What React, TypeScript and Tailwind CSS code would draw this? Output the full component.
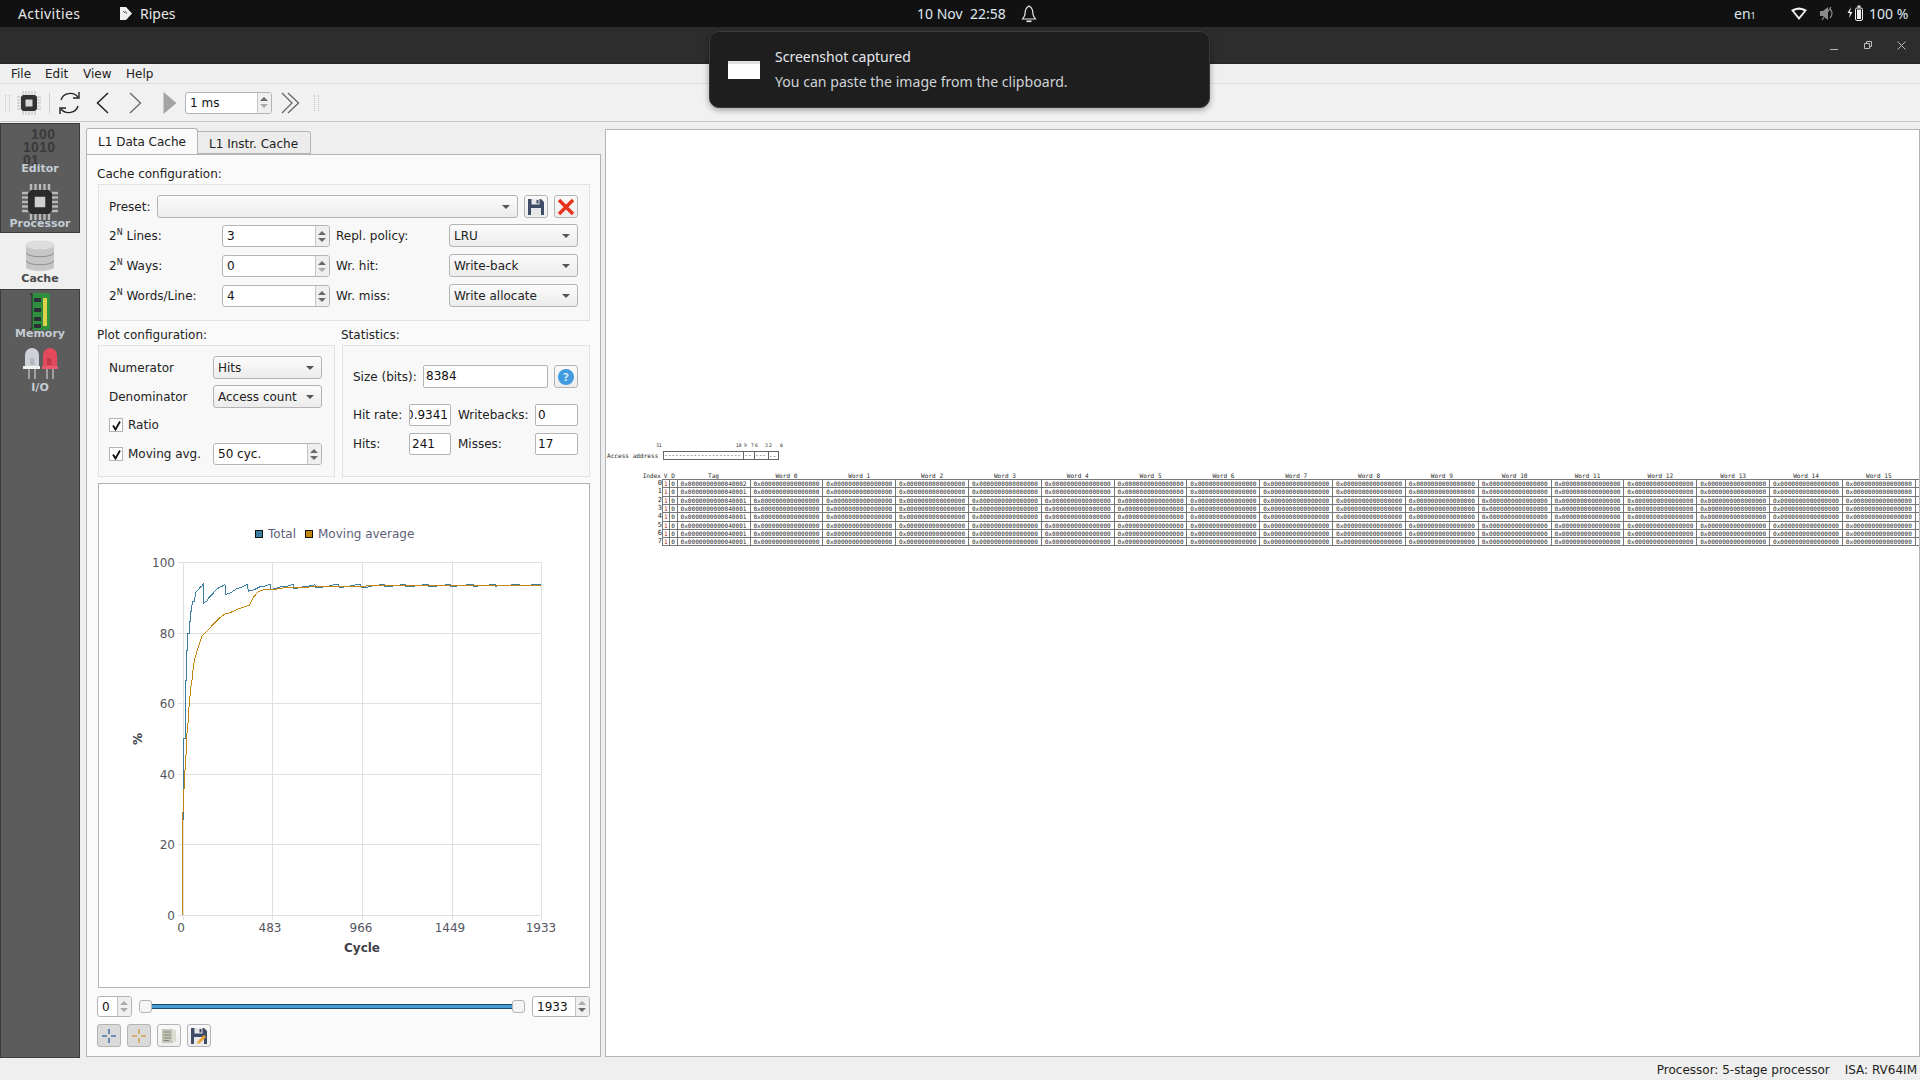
import React from "react";

const border = "border border-[#b4b4b4]";

function Tri({ up, color = "#5a5a5a" }: { up?: boolean; color?: string }) {
  return (
    <svg width="8" height="4" viewBox="0 0 8 4" className="block">
      <path d={up ? "M4 0 L8 4 H0 Z" : "M0 0 H8 L4 4 Z"} fill={color} />
    </svg>
  );
}

function Spin({ value, w, cls = "", downGray, upGray }: { value: string; w: string; cls?: string; downGray?: boolean; upGray?: boolean }) {
  return (
    <div className={`flex h-[22px] shrink-0 rounded-[3px] bg-white overflow-hidden ${border} ${w} ${cls}`}>
      <div className="flex-1 pl-[4px] leading-[21px] text-[#111] overflow-hidden">{value}</div>
      <div className="w-[14px] pr-[1px] border-l border-[#c4c4c4] bg-[#efefef] flex flex-col items-center justify-center gap-[3px]">
        <Tri up color={upGray ? "#aaaaaa" : "#6a6a6a"} />
        <Tri color={downGray ? "#aaaaaa" : "#6a6a6a"} />
      </div>
    </div>
  );
}

function Combo({ value, w, cls = "" }: { value: string; w: string; cls?: string }) {
  return (
    <div className={`flex items-center h-[23px] shrink-0 rounded-[3px] bg-gradient-to-b from-[#fbfbfb] to-[#ececec] ${border} ${w} ${cls}`}>
      <div className="flex-1 pl-[4px] text-[#222]">{value}</div>
      <div className="pr-[7px]">
        <Tri color="#555555" />
      </div>
    </div>
  );
}

function Field({ value, w, cls = "" }: { value: string; w: string; cls?: string }) {
  return (
    <div className={`h-[22px] shrink-0 rounded-[2px] bg-white pl-[2px] leading-[21px] text-[#111] overflow-hidden ${border} ${w} ${cls}`}>
      {value}
    </div>
  );
}

function ToolBtn({ children, pressed }: { children: React.ReactNode; pressed?: boolean }) {
  return (
    <div className={`w-[24px] h-[23px] shrink-0 flex items-center justify-center rounded-[3px] ${border} ${pressed ? "bg-[#dadada]" : "bg-gradient-to-b from-[#fafafa] to-[#ededed]"}`}>
      {children}
    </div>
  );
}

function Floppy({ pencil }: { pencil?: boolean }) {
  return (
    <svg width="18" height="18" viewBox="0 0 18 18">
      <path d="M1 1 H14 L17 4 V17 H1 Z" fill="#3f4c66" />
      <rect x="4.5" y="1" width="8" height="5.5" fill="#e8e8ea" />
      <rect x="9.5" y="2" width="2" height="3.5" fill="#3f4c66" />
      <rect x="4" y="10" width="10" height="7" fill="#e8e8ea" />
      {pencil && <path d="M7 17 L8 14 L14 8 L16 10 L10 16 Z" fill="#e8a33a" />}
    </svg>
  );
}

function Check({ label, cls = "" }: { label: string; cls?: string }) {
  return (
    <div className={`flex items-center ${cls}`}>
      <div className="w-[14px] h-[14px] shrink-0 bg-white border border-[#b4b4b4] flex items-center justify-center">
        <svg width="11" height="11" viewBox="0 0 11 11">
          <path d="M2 5.5 L4.5 9.5 L9 1.5" fill="none" stroke="#111" strokeWidth="1.8" />
        </svg>
      </div>
      <span className="ml-[5px] text-[#222]">{label}</span>
    </div>
  );
}

function Power() {
  return (
    <span>
      2<sup className="text-[8px] -top-[5px]">N</sup>
    </span>
  );
}

function Chip({ size = 24, body = "#333", pin = "#d0d0d0", core = "#d8d8d8" }: { size?: number; body?: string; pin?: string; core?: string }) {
  const t = [5, 8, 11, 14, 17];
  return (
    <svg width={size} height={size} viewBox="0 0 24 24">
      {t.map((p) => (
        <g key={p} stroke={pin} strokeWidth="1.6">
          <line x1={p + 1} y1="0" x2={p + 1} y2="5" />
          <line x1={p + 1} y1="19" x2={p + 1} y2="24" />
          <line x1="0" y1={p + 1} x2="5" y2={p + 1} />
          <line x1="19" y1={p + 1} x2="24" y2={p + 1} />
        </g>
      ))}
      <path d="M6 4 H18 L20 6 V18 L18 20 H6 L4 18 V6 Z" fill={body} />
      <rect x="8.5" y="8.5" width="7" height="7" fill={core} />
    </svg>
  );
}

function SideLabel({ children, dark }: { children: React.ReactNode; dark?: boolean }) {
  return (
    <div className={`text-[11px] font-bold leading-[12px] ${dark ? "text-[#4a4a4a]" : "text-[#c4ccd4]"}`}>{children}</div>
  );
}

function Sidebar() {
  return (
    <div className="w-[80px] shrink-0 mt-[1px] mb-[2px] flex flex-col">
      <div className="h-[110px] bg-[#5c5c5c] border border-[#3c3c3c] flex flex-col items-center">
        <div className="h-[54px] w-full flex flex-col relative">
          <div className="mt-[4px] ml-[22px] h-[38px] text-[14px] font-bold leading-[13px] text-[#3a3a3a] [font-family:'Liberation_Sans',sans-serif] tracking-[0.3px]">
            <div className="pl-[8px]">100</div>
            <div>1010</div>
            <div>01</div>
          </div>
          <div className="absolute top-[39px] left-0 right-0 text-center"><SideLabel>Editor</SideLabel></div>
        </div>
        <div className="h-[55px] flex flex-col items-center">
          <div className="mt-[6px]"><Chip size={36} body="#2b2b2b" pin="#b8b8b8" core="#cfcfcf" /></div>
          <div className="-mt-[2px]"><SideLabel>Processor</SideLabel></div>
        </div>
      </div>
      <div className="h-[56px] bg-[#efefef] flex flex-col items-center pt-[7px]">
        <svg width="30" height="32" viewBox="0 0 30 32">
          <path d="M1 5 C1 0 29 0 29 5 V27 C29 32 1 32 1 27 Z" fill="#c6c6c6" />
          <ellipse cx="15" cy="5" rx="14" ry="4.5" fill="#dcdcdc" />
          <path d="M1 13 C4 18 26 18 29 13" fill="none" stroke="#8e8e8e" />
          <path d="M1 21 C4 26 26 26 29 21" fill="none" stroke="#8e8e8e" />
        </svg>
        <div className="mt-[1px]"><SideLabel dark>Cache</SideLabel></div>
      </div>
      <div className="flex-1 bg-[#5c5c5c] border border-[#3c3c3c] flex flex-col items-center">
        <div className="mt-[3px] h-[35px]">
          <svg width="20" height="37" viewBox="0 0 20 37">
            <rect x="2" y="0" width="18" height="37" rx="2" fill="#2f8f3f" />
            <path d="M0 1 H2 V36 H0" fill="none" stroke="#222" />
            {[5, 15, 24, 31].map((y) => (
              <rect key={y} x="4" y={y} width="7" height="4" fill="#2e2e3a" />
            ))}
            <rect x="13" y="5" width="4" height="28" fill="#d9d24a" />
          </svg>
        </div>
        <SideLabel>Memory</SideLabel>
        <div className="mt-[7px]">
          <svg width="36" height="32" viewBox="0 0 36 32" className="block">
            <path d="M3 20 V8 a7 7 0 0 1 14 0 V20 Z" fill="#cfd2d8" />
            <path d="M8 11 H12 L13 18 H8 Z" fill="#b4b8c0" />
            <rect x="1" y="19" width="17" height="3" fill="#f0f0f0" />
            <path d="M21 20 V8 a7 7 0 0 1 14 0 V20 Z" fill="#e34a5b" />
            <path d="M25 11 H29 L30 18 H25 Z" fill="#c03a4c" />
            <rect x="20" y="19" width="16" height="3" fill="#ea5a6a" />
            <path d="M7 22 V32 M13 22 V32 M25 22 V32 M31 22 V32" stroke="#b8b8b8" strokeWidth="1.5" />
          </svg>
        </div>
        <div className="mt-[3px]"><SideLabel>I/O</SideLabel></div>
      </div>
    </div>
  );
}

const bluePts: [number, number][] = [
  [69, 930], [69, 900], [70, 900], [70, 685], [76, 685], [76, 512], [80, 512], [80, 421], [83, 421], [83, 370], [88, 370], [88, 335], [92, 335], [92, 305], [95, 305], [95, 290], [98, 275], [103, 275], [105, 260], [108, 245], [115, 240], [120, 232], [126, 228], [130, 223], [130, 280], [135, 276], [142, 272], [147, 262], [155, 255], [165, 243], [172, 236], [180, 231], [190, 227], [195, 223], [197, 253], [205, 251], [215, 246], [230, 236], [245, 232], [262, 223], [265, 244], [285, 238], [300, 230], [315, 228], [332, 223], [332, 238], [347, 236], [365, 229], [385, 228], [400, 223], [400, 235], [412, 235], [428, 230], [445, 229], [465, 224], [467, 232], [487, 232], [490, 229], [507, 228], [522, 224], [535, 224], [537, 232], [550, 232], [552, 228], [570, 228], [590, 224], [602, 224], [604, 232], [618, 232], [633, 230], [636, 227], [657, 227], [657, 224], [672, 224], [672, 229], [698, 229], [698, 227], [720, 227], [720, 224], [737, 224], [737, 229], [762, 229], [762, 227], [787, 227], [787, 224], [805, 224], [805, 229], [828, 229], [828, 227], [855, 227], [855, 224], [872, 224], [872, 229], [890, 229], [890, 227], [918, 227], [918, 224], [940, 224], [940, 229], [953, 229], [953, 227], [987, 227], [987, 224], [1007, 224], [1007, 229], [1010, 229], [1010, 227], [1053, 227], [1053, 224], [1077, 224], [1077, 227], [1115, 227], [1115, 224], [1144, 224],
];
const orangePts: [number, number][] = [
  [68, 1215], [68, 930], [71, 860], [73, 815], [78, 735], [80, 680], [85, 630], [87, 590], [92, 535], [96, 510], [100, 470], [105, 445], [112, 420], [125, 380], [135, 368], [145, 360], [160, 342], [178, 325], [195, 312], [210, 308], [235, 297], [268, 286], [280, 262], [295, 245], [315, 238], [350, 238], [355, 235], [400, 232], [450, 231], [470, 229], [540, 229], [600, 229], [640, 227], [1144, 227],
];
const ox = 99;
const oy = 484;
const toPath = (pts: [number, number][]) =>
  pts.map(([x, y]) => `${(160 + x / 3 - ox).toFixed(1)},${(510 + y / 3 - oy).toFixed(1)}`).join(" ");

function Chart() {
  const ys = [0, 20, 40, 60, 80, 100];
  const yPx = [915, 844, 774, 703, 633, 562];
  const xs = [
    { l: "0", x: 183, t: 181 },
    { l: "483", x: 272, t: 270 },
    { l: "966", x: 362, t: 361 },
    { l: "1449", x: 452, t: 450 },
    { l: "1933", x: 541, t: 541 },
  ];
  return (
    <svg width="490" height="503" viewBox="0 0 490 503" className="block">
      {yPx.map((y, i) => (
        <g key={i}>
          <line x1={178 - ox} x2={541 - ox} y1={y - oy + 0.5} y2={y - oy + 0.5} stroke="#e0e0e0" />
          <text x={175 - ox} y={y - oy + 4.5} textAnchor="end" fontSize="12" fill="#555560">{ys[i]}</text>
        </g>
      ))}
      {xs.map((v) => (
        <g key={v.l}>
          <line x1={v.x - ox + 0.5} x2={v.x - ox + 0.5} y1={562 - oy} y2={920 - oy} stroke="#e0e0e0" />
          <text x={v.t - ox} y={932 - oy} textAnchor="middle" fontSize="12" fill="#555560">{v.l}</text>
        </g>
      ))}
      <polyline points={toPath(bluePts)} fill="none" stroke="#3b7ea1" strokeWidth="1" shapeRendering="crispEdges" />
      <polyline points={toPath(orangePts)} fill="none" stroke="#c5860f" strokeWidth="1" shapeRendering="crispEdges" />
      <rect x={255.5 - ox} y={530.5 - oy} width="7" height="7" fill="#3b7ea1" stroke="#111" />
      <text x={268 - ox} y={538 - oy} fontSize="12" fill="#60607a">Total</text>
      <rect x={305.5 - ox} y={530.5 - oy} width="7" height="7" fill="#c5860f" stroke="#111" />
      <text x={318 - ox} y={538 - oy} fontSize="12" fill="#60607a">Moving average</text>
      <text x={362 - ox} y={952 - oy} fontSize="12" fontWeight="bold" textAnchor="middle" fill="#404048">Cycle</text>
      <text transform={`translate(${142 - ox} ${739 - oy}) rotate(-90)`} fontSize="12" fontWeight="bold" textAnchor="middle" fill="#404048">%</text>
    </svg>
  );
}

function LeftPanel() {
  const rows = [
    { l: "Lines:", v: "3", l2: "Repl. policy:", c: "LRU" },
    { l: "Ways:", v: "0", l2: "Wr. hit:", c: "Write-back", dg: true },
    { l: "Words/Line:", v: "4", l2: "Wr. miss:", c: "Write allocate" },
  ];
  return (
    <div className="w-[515px] ml-[6px] shrink-0 pt-[7px] flex flex-col">
      <div className="h-[25px] flex items-end relative z-10">
        <div className="w-[112px] h-[26px] bg-[#fafafa] border border-b-0 border-[#b4b4b4] rounded-t-[3px] pl-[11px] leading-[26px] text-[#222]">L1 Data Cache</div>
        <div className="w-[113px] h-[23px] bg-[#ececec] border border-l-0 border-[#b4b4b4] rounded-tr-[3px] pl-[11px] leading-[24px] text-[#222]">L1 Instr. Cache</div>
      </div>
      <div className={`h-[903px] bg-[#fafafa] ${border} pl-[10px] pr-[10px] pt-[10px] flex flex-col text-[#222]`}>
        <div className="h-[19px] leading-[18px]">Cache configuration:</div>
        <div className="ml-[1px] h-[137px] border border-[#e2e2e2] bg-[#f8f8f8] pl-[10px] pr-[11px] pt-[10px]">
          <div className="flex items-center">
            <div className="w-[48px]">Preset:</div>
            <Combo value="" w="w-[361px]" />
            <div className="ml-[6px]"><ToolBtn><Floppy /></ToolBtn></div>
            <div className="ml-[6px]">
              <ToolBtn>
                <svg width="18" height="18" viewBox="0 0 18 18">
                  <path d="M2 2 L16 16 M16 2 L2 16" stroke="#e8321a" strokeWidth="3.4" />
                </svg>
              </ToolBtn>
            </div>
          </div>
          <div className="mt-[6px] flex flex-col gap-[7px]">
            {rows.map((r) => (
              <div key={r.l} className="flex items-center h-[23px]">
                <div className="w-[113px]"><Power /> {r.l}</div>
                <Spin value={r.v} w="w-[108px]" cls="mt-[1px]" downGray={r.dg} />
                <div className="ml-[6px] w-[113px]">{r.l2}</div>
                <Combo value={r.c} w="w-[129px]" />
              </div>
            ))}
          </div>
        </div>
        <div className="flex mt-[4px] h-[20px] leading-[20px]">
          <div className="w-[244px]">Plot configuration:</div>
          <div>Statistics:</div>
        </div>
        <div className="flex ml-[1px] gap-[7px] h-[132px]">
          <div className="w-[237px] border border-[#e2e2e2] bg-[#f8f8f8] pl-[10px] pt-[10px]">
            <div className="flex items-center"><div className="w-[104px]">Numerator</div><Combo value="Hits" w="w-[109px]" /></div>
            <div className="flex items-center mt-[6px]"><div className="w-[104px]">Denominator</div><Combo value="Access count" w="w-[109px]" /></div>
            <Check label="Ratio" cls="mt-[8px]" />
            <div className="flex items-center mt-[9px]">
              <Check label="Moving avg." cls="w-[104px]" />
              <Spin value="50 cyc." w="w-[109px]" />
            </div>
          </div>
          <div className="w-[248px] border border-[#e2e2e2] bg-[#f8f8f8] pl-[10px] pt-[19px]">
            <div className="flex items-center">
              <div className="w-[70px]">Size (bits):</div>
              <Field value="8384" w="w-[125px] !h-[23px]" />
              <div className="ml-[6px]">
                <ToolBtn>
                  <svg width="16" height="16" viewBox="0 0 16 16">
                    <circle cx="8" cy="8" r="8" fill="#3f9ae0" />
                    <text x="8" y="12" textAnchor="middle" fontSize="11" fill="#cfe6f8" fontWeight="bold">?</text>
                  </svg>
                </ToolBtn>
              </div>
            </div>
            <div className="flex items-center mt-[16px]">
              <div className="w-[56px]">Hit rate:</div>
              <div className={`h-[22px] w-[42px] shrink-0 rounded-[2px] bg-white pr-[2px] leading-[21px] text-[#111] overflow-hidden flex justify-end whitespace-nowrap ${border}`}>
                <span className="shrink-0">0.9341</span>
              </div>
              <div className="ml-[7px] w-[77px]">Writebacks:</div>
              <Field value="0" w="w-[43px]" />
            </div>
            <div className="flex items-center mt-[7px]">
              <div className="w-[56px]">Hits:</div>
              <Field value="241" w="w-[42px]" />
              <div className="ml-[7px] w-[77px]">Misses:</div>
              <Field value="17" w="w-[43px]" />
            </div>
          </div>
        </div>
        <div className="ml-[1px] mt-[6px] h-[505px] w-[492px] bg-white border border-[#b4b4b4]">
          <Chart />
        </div>
        <div className="flex items-center h-[21px] mt-[8px]">
          <Spin value="0" w="w-[35px]" cls="!h-[21px]" upGray downGray />
          <div className="ml-[7px] w-[386px] h-[14px] relative flex items-center">
            <div className="w-full h-[5px] mx-[6px] bg-[#4a9bd5] border-y border-[#1d4a6c]" />
            <div className="absolute left-0 w-[13px] h-[13px] rounded-[3px] bg-[#f4f4f4] border border-[#b4b4b4]" />
            <div className="absolute right-0 w-[13px] h-[13px] rounded-[3px] bg-[#f4f4f4] border border-[#b4b4b4]" />
          </div>
          <Spin value="1933" w="w-[58px]" cls="ml-[7px] !h-[21px]" upGray />
        </div>
        <div className="flex gap-[6px] mt-[7px]">
          <ToolBtn pressed>
            <svg width="16" height="16" viewBox="0 0 16 16"><path d="M8 1 V6 M8 10 V15 M1 8 H6 M10 8 H15" stroke="#4a74a8" strokeWidth="1.6" /></svg>
          </ToolBtn>
          <ToolBtn pressed>
            <svg width="16" height="16" viewBox="0 0 16 16"><path d="M8 1 V6 M8 10 V15 M1 8 H6 M10 8 H15" stroke="#d4a04a" strokeWidth="1.6" /></svg>
          </ToolBtn>
          <ToolBtn>
            <svg width="16" height="16" viewBox="0 0 16 16">
              <rect x="1" y="1" width="11" height="14" fill="#c4c6b8" />
              <rect x="11" y="2" width="4" height="12" fill="#dcdcd0" />
              <path d="M2.5 4 H10 M2.5 7 H10 M2.5 10 H10 M2.5 12.5 H8" stroke="#85877c" strokeWidth="1.2" />
            </svg>
          </ToolBtn>
          <ToolBtn><Floppy pencil /></ToolBtn>
        </div>
      </div>
    </div>
  );
}

const W_COL = "w-[72.83px]";
const tag = (i: number) => (i === 0 ? "0x0000000000040002" : "0x0000000000040001");

function CacheTable() {
  const words = Array.from({ length: 16 }, (_, i) => i);
  const rows = Array.from({ length: 8 }, (_, i) => i);
  const bits: [string, number][] = [["31", 49], ["18", 129], ["9", 137], ["7", 144], ["6", 148], ["3", 158], ["2", 162], ["0", 173]];
  return (
    <div className="pt-[312px] pl-[1px] [font-family:'DejaVu_Sans_Mono',monospace] text-[6.1px] text-[#2a2a2a] leading-[8px]">
      <div className="relative h-[7px] text-[4.7px]">
        {bits.map(([t, x]) => (
          <span key={t} className="absolute top-0" style={{ left: x }}>{t}</span>
        ))}
      </div>
      <div className="flex items-center h-[9px] mt-[2px]">
        <div className="w-[56px]">Access address</div>
        <div className="w-[116px] h-[9px] border border-[#666] flex items-center leading-[6px] overflow-hidden">
          <div className="w-[80px] h-full border-r border-[#666] whitespace-nowrap">---------------------</div>
          <div className="w-[11px] h-full border-r border-[#666]">--</div>
          <div className="w-[14px] h-full border-r border-[#666]">---</div>
          <div className="flex-1">--</div>
        </div>
      </div>
      <div className="flex h-[7px] mt-[12px] text-center">
        <div className="w-[55px] text-right pr-[1px]">Index</div>
        <div className="w-[7px]">V</div>
        <div className="w-[8px]">D</div>
        <div className="w-[73px]">Tag</div>
        {words.map((w) => (
          <div key={w} className={W_COL}>Word {w}</div>
        ))}
      </div>
      <div className="flex flex-col">
        {rows.map((r) => (
          <div key={r} className="flex h-[8.35px]">
            <div className="w-[55px] text-right leading-[8px] text-[7px]">{r}</div>
            <div className={`flex flex-1 border-[#777] border-t border-l ${r === 7 ? "border-b" : ""}`}>
              <div className="w-[6.5px] text-center border-r border-[#777] text-[#b02020]">1</div>
              <div className="w-[8px] text-center border-r border-[#777]">0</div>
              <div className="w-[73px] text-center border-r border-[#777]">{tag(r)}</div>
              {words.map((w) => (
                <div key={w} className={`${W_COL} text-center border-r border-[#777]`}>0x0000000000000000</div>
              ))}
            </div>
          </div>
        ))}
      </div>
    </div>
  );
}

export default function App() {
  return (
    <div className="relative w-[1920px] h-[1080px] overflow-hidden bg-[#efefef] flex flex-col [font-family:'DejaVu_Sans',sans-serif] text-[12px]">
      {/* GNOME top bar */}
      <div className="h-[27px] shrink-0 bg-[#111111] flex items-center text-[#e8e8e8] text-[14px] [font-family:'Noto_Sans',sans-serif] relative">
        <div className="ml-[18px] w-[101px] tracking-[0.4px]">Activities</div>
        <svg width="13" height="13" viewBox="0 0 13 13"><path d="M1 0 H7 L13 6.5 L7 13 H1 Z" fill="#f0f0f0" /><path d="M4 4 L6 6 M6 4 L8 7" stroke="#666" /></svg>
        <div className="ml-[8px]">Ripes</div>
        <div className="absolute left-[917px] top-[3px] text-[#dfe8f0]">10 Nov&nbsp; 22:58</div>
        <div className="absolute left-[1021px] top-[5px]">
          <svg width="16" height="18" viewBox="0 0 16 18"><path d="M8 1 C4 3 4 6 4 9 C4 11 3 12 1.5 14 H14.5 C13 12 12 11 12 9 C12 6 12 3 8 1 Z" fill="none" stroke="#e8e8e8" strokeWidth="1.2" /><rect x="5.5" y="15.5" width="5" height="1.6" fill="#e8e8e8" /></svg>
        </div>
        <div className="absolute left-[1734px] top-[3px] text-[#dfe8f0]">en<span className="text-[9px]">1</span></div>
        <div className="absolute left-[1791px] top-[7px]">
          <svg width="16" height="13" viewBox="0 0 16 13"><path d="M0 3 Q8 -2 16 3 L8 13 Z M3 4 Q8 1.500 13 4 L8 10 Z" fill="#f0f0f0" fillRule="evenodd" /></svg>
        </div>
        <div className="absolute left-[1820px] top-[6px]">
          <svg width="15" height="15" viewBox="0 0 15 15"><path d="M0 5 H3 L8 1 V14 L3 10 H0 Z" fill="#8a8a8a" /><path d="M10 3 Q14 7.500 10 12 M2 14 L11 1" fill="none" stroke="#8a8a8a" strokeWidth="1.300" /></svg>
        </div>
        <div className="absolute left-[1847px] top-[5px]">
          <svg width="17" height="17" viewBox="0 0 17 17"><path d="M4 2 L0.500 8 H3 L2 13 L5.500 7 H3 Z" fill="#eee" /><rect x="8.500" y="3" width="7" height="12.500" rx="1.500" fill="none" stroke="#eee" /><rect x="10" y="4.500" width="4" height="9.500" fill="#eee" /><rect x="10.500" y="0.500" width="3" height="2" fill="#eee" /></svg>
        </div>
        <div className="absolute left-[1869px] top-[3px] text-[#dfe8f0]">100 %</div>
      </div>
      {/* Title bar */}
      <div className="h-[37px] shrink-0 bg-[#2d2d2d] flex items-center justify-end border-b border-[#262626]">
        <div className="w-[8px] h-[1px] bg-[#bdbdbd] mt-[9px]" />
        <svg className="ml-[26px]" width="8" height="8" viewBox="0 0 8 8"><path d="M0.500 2.500 H5.500 V7.500 H0.500 Z M2.500 2.500 V0.500 H7.500 V5.500 H5.500" fill="none" stroke="#bdbdbd" /></svg>
        <svg className="ml-[25px] mr-[14px]" width="9" height="9" viewBox="0 0 9 9"><path d="M0.500 0.500 L8.500 8.500 M8.500 0.500 L0.500 8.500" stroke="#bdbdbd" /></svg>
      </div>
      {/* Menu bar */}
      <div className="h-[20px] shrink-0 bg-[#efefef] border-b border-[#dcdcdc] flex items-center text-[#222] leading-[18px] pl-[11px]">
        <span className="w-[34px]">File</span>
        <span className="w-[38px]">Edit</span>
        <span className="w-[43px]">View</span>
        <span>Help</span>
      </div>
      {/* Toolbar */}
      <div className="h-[38px] shrink-0 bg-[#f1f1f1] border-b border-[#c8c8c8] flex items-center pl-[5px]">
        <div className="w-[5px] h-[16px] border-x border-dotted border-[#c4c4c4]" />
        <div className="ml-[7px]"><Chip size={24} /></div>
        <div className="ml-[8px] w-[1px] h-[20px] bg-[#d0d0d0]" />
        <svg className="ml-[8px]" width="23" height="24" viewBox="0 0 23 24">
          <path d="M3 9 C5 2 15 0 20 6 M20 15 C18 22 8 24 3 18" fill="none" stroke="#222" strokeWidth="1.400" />
          <path d="M21 1 V7 H15 M2 23 V17 H8" fill="none" stroke="#222" strokeWidth="1.400" />
        </svg>
        <svg className="ml-[15px]" width="13" height="22" viewBox="0 0 13 22"><path d="M12 1 L1.500 11 L12 21" fill="none" stroke="#222" strokeWidth="1.500" /></svg>
        <svg className="ml-[20px]" width="13" height="22" viewBox="0 0 13 22"><path d="M1 1 L11.500 11 L1 21" fill="none" stroke="#666" strokeWidth="1.300" /></svg>
        <svg className="ml-[21px]" width="14" height="22" viewBox="0 0 14 22"><path d="M0.500 0 L13.500 11 L0.500 22 Z" fill="#a4a4a4" /></svg>
        <Spin value="1 ms" w="w-[87px]" cls="ml-[8px]" downGray />
        <svg className="ml-[9px]" width="19" height="22" viewBox="0 0 19 22"><path d="M1 1 L11 11 L1 21 M7 1 L17.500 11 L7 21" fill="none" stroke="#666" strokeWidth="1.300" /></svg>
        <div className="ml-[14px] w-[5px] h-[16px] border-x border-dotted border-[#c4c4c4]" />
      </div>
      {/* Main */}
      <div className="h-[938px] shrink-0 flex">
        <Sidebar />
        <LeftPanel />
        <div className="ml-[4px] mt-[7px] mb-[3px] flex-1 min-w-0 bg-white border border-[#b4b4b4] overflow-hidden">
          <CacheTable />
        </div>
      </div>
      {/* Status bar */}
      <div className="h-[20px] shrink-0 flex items-center justify-end pr-[3px] text-[#222]">
        <span>Processor: 5-stage processor</span>
        <span className="ml-[15px]">ISA: RV64IM</span>
      </div>
      {/* Notification */}
      <div className="absolute left-[709px] top-[31px] w-[501px] h-[77px] rounded-[10px] bg-[#1e1e1e] border border-[#3a3a3a] shadow-[0_2px_6px_rgba(0,0,0,0.35)] flex items-center text-[#e4e8ec] [font-family:'Noto_Sans',sans-serif]">
        <div className="ml-[18px] w-[32px] h-[18px] bg-white border-t-[3px] border-t-[#e0e0e0]" />
        <div className="ml-[15px]">
          <div className="text-[14px] leading-[20px]">Screenshot captured</div>
          <div className="text-[14.1px] leading-[20px] mt-[5px] text-[#d0d4d8]">You can paste the image from the clipboard.</div>
        </div>
      </div>
    </div>
  );
}
